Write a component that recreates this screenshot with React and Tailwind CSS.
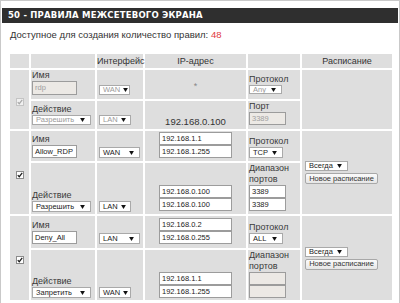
const Arrow = () => (
  <svg viewBox="0 0 6 5" className="w-[5px] h-[4px] shrink-0">
    <path d="M0 0 L6 0 L3 5 Z" fill="#111" />
  </svg>
);

function Select({ label, className = "", disabled = false }) {
  return (
    <div
      className={`flex items-center justify-between gap-[3px] border border-[#a9a9a9] bg-white pl-[3px] pr-[5px] text-[7.5px] leading-none ${
        disabled ? "text-[#9a9a9a]" : "text-[#222]"
      } ${className}`}
    >
      <span>{label}</span>
      <Arrow />
    </div>
  );
}

function Input({ value = "", className = "", disabled = false }) {
  return (
    <div
      className={`h-[13px] flex items-center border border-[#9c9c9c] px-[2px] text-[7.5px] leading-none ${
        disabled ? "bg-[#ece9e5] text-[#a0a0a0]" : "bg-white text-[#222]"
      } ${className}`}
    >
      {value}
    </div>
  );
}

function Check({ disabled = false }) {
  return (
    <span
      className={`inline-flex w-[8px] h-[8px] items-center justify-center border ${
        disabled ? "border-[#c4c4c4] bg-[#f0f0f0]" : "border-[#8c8c8c] bg-white"
      }`}
    >
      <svg viewBox="0 0 8 8" className="w-[6px] h-[6px]">
        <path
          d="M1 4.2 L3 6.3 L7 1.2"
          stroke={disabled ? "#a8a8a8" : "#1a1a1a"}
          strokeWidth="1.6"
          fill="none"
        />
      </svg>
    </span>
  );
}

function Label({ children }) {
  return <div className="text-[9px] leading-[11px] text-[#3a3a3a]">{children}</div>;
}

function Schedule() {
  return (
    <div className="flex flex-col items-start gap-[2px]">
      <Select label="Всегда" className="w-[43px] h-[10px]" />
      <div className="w-[73px] h-[11px] flex items-center justify-center rounded-[2px] border border-[#a8a8a8] bg-gradient-to-b from-[#fbfbfb] to-[#e6e6e6] text-[7.5px] leading-none text-[#333]">
        Новое расписание
      </div>
    </div>
  );
}

const cell = "bg-[#dedede] p-0";

export default function App() {
  return (
    <div className="w-[400px] h-[303px] overflow-hidden bg-white border-t border-x border-[#c9c9c9] font-['Liberation_Sans',Arial,sans-serif]">
      <div className="mt-[7px] mx-[1px] h-[15px] flex items-center pl-[6px] bg-[#2f2f2f] text-white font-bold text-[8.5px] tracking-[0.2px] font-['DejaVu_Sans',sans-serif]">
        50 - ПРАВИЛА МЕЖСЕТЕВОГО ЭКРАНА
      </div>
      <div className="mt-[6px] pl-[9px] text-[9.5px] leading-[12px] text-[#333]">
        Доступное для создания количество правил: <span className="text-[#e0393e]">48</span>
      </div>

      <table className="mt-[11px] ml-[7px] w-[386px] table-fixed border-separate border-spacing-[2px]">
        <colgroup>
          <col className="w-[19px]" />
          <col className="w-[64px]" />
          <col className="w-[46px]" />
          <col className="w-[101px]" />
          <col className="w-[52px]" />
          <col className="w-[90px]" />
        </colgroup>
        <tbody>
          <tr className="h-[14px] text-[9px] leading-none text-[#333] text-center">
            <td className={cell}></td>
            <td className={cell}></td>
            <td className={cell}>Интерфейс</td>
            <td className={cell}>IP-адрес</td>
            <td className={cell}></td>
            <td className={cell}>Расписание</td>
          </tr>

          {/* rdp */}
          <tr className="h-[29px]">
            <td rowSpan={2} className={`${cell} text-center align-middle`}>
              <Check disabled />
            </td>
            <td className={`${cell} align-bottom pl-[1px] pb-[4px]`}>
              <Label>Имя</Label>
              <Input value="rdp" disabled className="w-[45px] h-[14px]" />
            </td>
            <td className={`${cell} align-bottom pl-[2px] pb-[4px]`}>
              <Select label="WAN" disabled className="w-[31px] h-[10px]" />
            </td>
            <td className={`${cell} align-middle text-center text-[9px] text-[#888]`}>
              <div className="pt-[4px]">*</div>
            </td>
            <td className={`${cell} align-bottom pl-[1px] pb-[5px]`}>
              <Label>Протокол</Label>
              <Select label="Any" disabled className="w-[33px] h-[9px]" />
            </td>
            <td rowSpan={2} className={cell}></td>
          </tr>
          <tr className="h-[27px]">
            <td className={`${cell} align-bottom pl-[1px] pb-[4px]`}>
              <Label>Действие</Label>
              <Select label="Разрешить" disabled className="w-[59px] h-[10px]" />
            </td>
            <td className={`${cell} align-bottom pl-[2px] pb-[4px]`}>
              <Select label="LAN" disabled className="w-[32px] h-[10px]" />
            </td>
            <td className={`${cell} align-bottom text-center pb-[2px] text-[9.5px] leading-[11px] text-[#333]`}>
              192.168.0.100
            </td>
            <td className={`${cell} align-bottom pl-[1px] pb-[4px]`}>
              <Label>Порт</Label>
              <Input value="3389" disabled className="w-[37px]" />
            </td>
          </tr>

          {/* Allow_RDP */}
          <tr className="h-[30px]">
            <td rowSpan={2} className={`${cell} text-center align-middle`}>
              <Check />
            </td>
            <td className={`${cell} align-bottom pl-[1px] pb-[3px]`}>
              <Label>Имя</Label>
              <Input value="Allow_RDP" className="w-[45px]" />
            </td>
            <td className={`${cell} align-bottom pl-[2px] pb-[3px]`}>
              <Select label="WAN" className="w-[41px] h-[11px]" />
            </td>
            <td className={`${cell} align-bottom pb-[3px]`}>
              <div className="flex flex-col items-center">
                <Input value="192.168.1.1" className="w-[73px]" />
                <Input value="192.168.1.255" className="w-[73px]" />
              </div>
            </td>
            <td className={`${cell} align-bottom pl-[1px] pb-[3px]`}>
              <Label>Протокол</Label>
              <Select label="TCP" className="w-[34px] h-[11px]" />
            </td>
            <td rowSpan={2} className={`${cell} align-middle pl-[3px]`}>
              <Schedule />
            </td>
          </tr>
          <tr className="h-[51px]">
            <td className={`${cell} align-bottom pl-[1px] pb-[2px]`}>
              <Label>Действие</Label>
              <Select label="Разрешить" className="w-[59px] h-[11px]" />
            </td>
            <td className={`${cell} align-bottom pl-[2px] pb-[2px]`}>
              <Select label="LAN" className="w-[32px] h-[11px]" />
            </td>
            <td className={`${cell} align-bottom pb-[3px]`}>
              <div className="flex flex-col items-center">
                <Input value="192.168.0.100" className="w-[73px]" />
                <Input value="192.168.0.100" className="w-[73px]" />
              </div>
            </td>
            <td className={`${cell} align-bottom pl-[1px] pb-[3px]`}>
              <Label>Диапазон портов</Label>
              <Input value="3389" className="w-[37px]" />
              <Input value="3389" className="w-[37px]" />
            </td>
          </tr>

          {/* Deny_All */}
          <tr className="h-[32px]">
            <td rowSpan={2} className={`${cell} text-center align-middle`}>
              <Check />
            </td>
            <td className={`${cell} align-bottom pl-[1px] pb-[4px]`}>
              <Label>Имя</Label>
              <Input value="Deny_All" className="w-[45px]" />
            </td>
            <td className={`${cell} align-bottom pl-[2px] pb-[4px]`}>
              <Select label="LAN" className="w-[41px] h-[11px]" />
            </td>
            <td className={`${cell} align-bottom pb-[4px]`}>
              <div className="flex flex-col items-center">
                <Input value="192.168.0.2" className="w-[73px]" />
                <Input value="192.168.0.255" className="w-[73px]" />
              </div>
            </td>
            <td className={`${cell} align-bottom pl-[1px] pb-[4px]`}>
              <Label>Протокол</Label>
              <Select label="ALL" className="w-[34px] h-[11px]" />
            </td>
            <td rowSpan={2} className={`${cell} align-middle pl-[3px]`}>
              <Schedule />
            </td>
          </tr>
          <tr className="h-[50px]">
            <td className={`${cell} align-bottom pl-[1px] pb-[2px]`}>
              <Label>Действие</Label>
              <Select label="Запретить" className="w-[59px] h-[11px]" />
            </td>
            <td className={`${cell} align-bottom pl-[2px] pb-[2px]`}>
              <Select label="WAN" className="w-[32px] h-[11px]" />
            </td>
            <td className={`${cell} align-bottom pb-[2px]`}>
              <div className="flex flex-col items-center">
                <Input value="192.168.1.1" className="w-[73px]" />
                <Input value="192.168.1.255" className="w-[73px]" />
              </div>
            </td>
            <td className={`${cell} align-bottom pl-[1px] pb-[2px]`}>
              <Label>Диапазон портов</Label>
              <Input disabled className="w-[37px]" />
              <Input disabled className="w-[37px]" />
            </td>
          </tr>
        </tbody>
      </table>
    </div>
  );
}
